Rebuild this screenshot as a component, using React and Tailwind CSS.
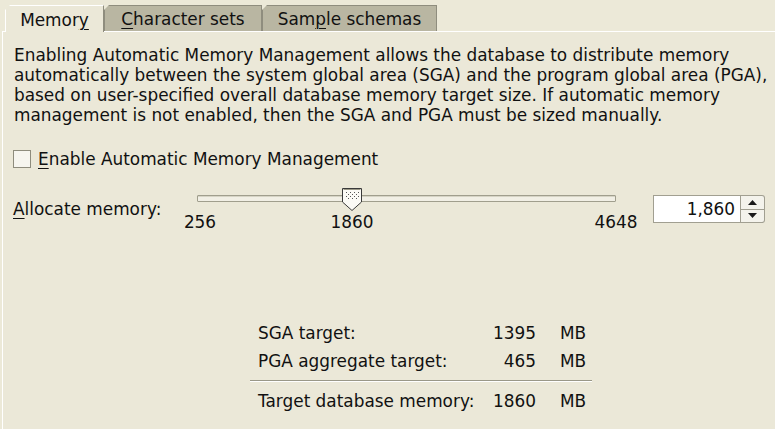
import React from "react";

const U = ({ children }) => (
	<span className="underline underline-offset-[3px] decoration-1">{children}</span>
);

const Tab = ({ selected, width, children }) => (
	<div
		className={
			"relative h-[26px] flex items-center justify-center leading-[20px] " +
			(selected
				? "bg-[#ebe8d8] border-l border-t border-[#ffffff] border-r-[#8f8d7e] border-r z-10 -mb-px h-[27px]"
				: "bg-[#b9b6a2] border border-b-0 border-[#8f8d7e]")
		}
		style={{ width }}
	>
		<span className="absolute -left-px -top-px w-[5px] h-[5px] bg-[#ece9d8] [clip-path:polygon(0_0,100%_0,0_100%)]" />
		<span className="pt-[1px]">{children}</span>
	</div>
);

const Thumb = () => (
	<svg width="22" height="25" viewBox="0 0 22 25" className="absolute top-0" style={{ left: 154 }}>
		<path d="M1.5 1.5 H20.5 V15 L11 23.5 L1.5 15 Z" fill="#fbfaf5" stroke="#3a3a3a" strokeWidth="1" />
		<path d="M2.5 2.5 H19.5" stroke="#9b9988" />
		{[
			[5, 5], [9, 5], [13, 5], [17, 5],
			[7, 7], [11, 7], [15, 7],
			[5, 9], [9, 9], [13, 9], [17, 9],
			[7, 11], [11, 11], [15, 11],
		].map(([x, y], i) => (
			<rect key={i} x={x} y={y} width="1" height="1" fill="#555" />
		))}
	</svg>
);

const Slider = ({ min, max, value }) => {
	const a = 13;
	const b = 429;
	const pos = (v) => a + ((v - min) / (max - min)) * (b - a);
	const labels = [min, value, max];
	return (
		<div className="relative w-[450px] h-[46px]">
			<div className="absolute left-[10px] top-[8px] w-[419px] h-[7px] border border-[#a09e8d] rounded-[1px] bg-[#f1efe5]">
				<div className="h-full border-t border-[#d6d4c5]" />
			</div>
			<Thumb />
			{labels.map((v, i) => (
				<span
					key={i}
					className="absolute top-[25px] -translate-x-1/2 leading-[20px]"
					style={{ left: pos(v) }}
				>
					{v}
				</span>
			))}
		</div>
	);
};

const Spinner = () => (
	<div className="flex h-[28px] mt-[8px]">
		<div className="w-[88px] h-full bg-white border border-[#a19f91] flex items-center justify-end pr-[5px] leading-[20px]">
			1,860
		</div>
		<div className="w-[24px] h-full flex flex-col border border-l-0 border-[#a19f91] rounded-r-[3px] bg-[#f4f3ec]">
			<div className="flex-1 flex items-center justify-center border-b border-[#a19f91]">
				<svg width="9" height="5" viewBox="0 0 9 5"><path d="M4.5 0 L9 5 H0 Z" fill="#1a1a1a" /></svg>
			</div>
			<div className="flex-1 flex items-center justify-center">
				<svg width="9" height="5" viewBox="0 0 9 5"><path d="M0 0 H9 L4.5 5 Z" fill="#1a1a1a" /></svg>
			</div>
		</div>
	</div>
);

const Row = ({ label, value, className = "" }) => (
	<div className={"grid grid-cols-[238px_48px_56px] leading-[20px] " + className}>
		<span className="pl-[8px]">{label}</span>
		<span className="text-right">{value}</span>
		<span className="pl-[24px]">MB</span>
	</div>
);

export default function App() {
	return (
		<div className="w-[775px] h-[429px] overflow-hidden bg-[#ece9d8] text-[#111] font-['DejaVu_Sans',sans-serif] text-[16.9px] flex flex-col">
			<div className="h-[31px] pt-[5px] pl-[5px] flex items-end">
				<Tab selected width={99}>Memor<U>y</U></Tab>
				<Tab width={158}><U>C</U>haracter sets</Tab>
				<Tab width={175}>Sam<U>p</U>le schemas</Tab>
			</div>
			<div className="flex-1 ml-[2px] border-l border-t border-white bg-[#ebe8d8] pl-[10px] flex flex-col">
				<p className="mt-[13px] pl-[1px] leading-[20px] whitespace-nowrap">
					Enabling Automatic Memory Management allows the database to distribute memory
					<br />
					automatically between the system global area (SGA) and the program global area (PGA),
					<br />
					based on user-specified overall database memory target size. If automatic memory
					<br />
					management is not enabled, then the SGA and PGA must be sized manually.
				</p>
				<div className="mt-[24px] h-[20px] flex items-center gap-[7px]">
					<div className="w-[18px] h-[18px] border border-[#8e8c7d] bg-[#f6f5ef]" />
					<span className="leading-[20px]"><U>E</U>nable Automatic Memory Management</span>
				</div>
				<div className="mt-[18px] flex">
					<span className="w-[174px] mt-[12px] leading-[20px] self-start"><U>A</U>llocate memory:</span>
					<Slider min={256} max={4648} value={1860} />
					<div className="ml-[16px]">
						<Spinner />
					</div>
				</div>
				<div className="mt-[90px] ml-[237px] w-[342px]">
					<Row label="SGA target:" value="1395" />
					<Row label="PGA aggregate target:" value="465" className="mt-[8px]" />
					<div className="mt-[9px] h-[2px] border-t border-[#9a9888] border-b border-b-white" />
					<Row label="Target database memory:" value="1860" className="mt-[9px]" />
				</div>
			</div>
		</div>
	);
}
